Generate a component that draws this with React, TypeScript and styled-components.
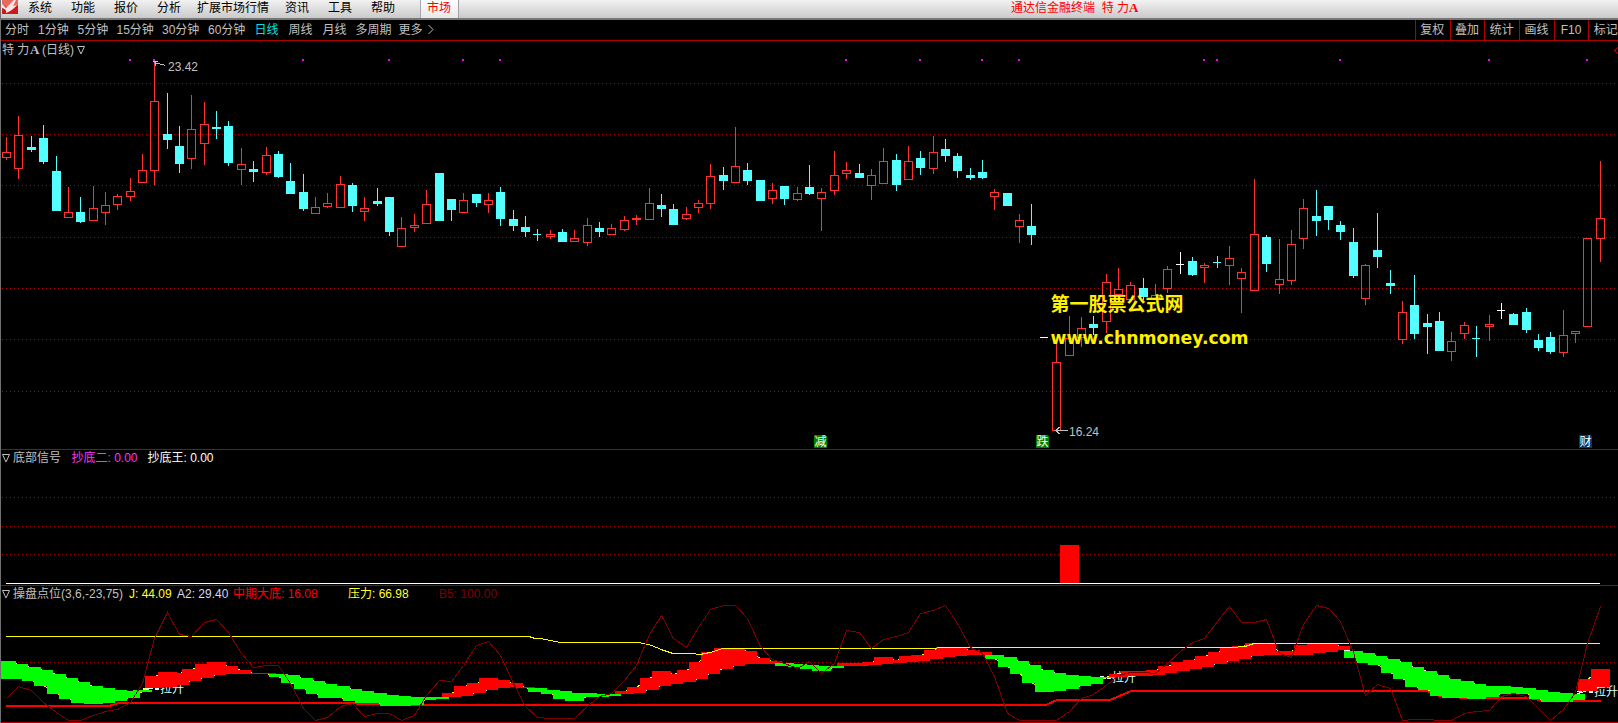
import styled, { createGlobalStyle } from "styled-components";

const GlobalStyle = createGlobalStyle`
  body {
    margin: 0;
    background: #000;
    overflow: hidden;
  }
`;

const LINE_RED = "#b00000";
const UP = "#ff3232";
const DOWN = "#54ffff";

const Screen = styled.div`
  width: 1618px;
  height: 723px;
  box-sizing: border-box;
  border-left: 1px solid #707070;
  background: #000;
  color: #c0c0c0;
  overflow: hidden;
  display: flex;
  flex-direction: column;
  font-family: "Liberation Sans", "Noto Sans CJK SC", sans-serif;
  font-size: 12px;
  line-height: 14px;
  white-space: pre;
`;

const MenuBar = styled.header`
  height: 20px;
  flex: none;
  box-sizing: border-box;
  display: flex;
  color: #000;
  line-height: 16px;
  background: linear-gradient(#f2f2f2, #cacaca);
  border-bottom: 2px solid #767676;
`;

const Logo = styled.svg`
  display: block;
  flex: none;
  width: 16px;
  height: 14px;
  margin: 0 10px 0 1px;
`;

const MenuItem = styled.div<{ $width: number }>`
  flex: none;
  width: ${({ $width }) => $width}px;
`;

const MarketTab = styled.div`
  flex: none;
  width: 39px;
  box-sizing: border-box;
  padding-left: 6px;
  color: #f00;
  background: linear-gradient(#fff, #e8e8e8);
  border-left: 1px solid #a8a8a8;
  border-right: 1px solid #a0a0a0;
`;

const WindowTitle = styled.div`
  margin-left: 552px;
  color: #f00;
`;

const SerifLetter = styled.span`
  font-family: "Liberation Serif", serif;
  font-weight: 700;
  font-size: 13px;
`;

const Toolbar = styled.nav`
  height: 21px;
  flex: none;
  box-sizing: border-box;
  display: flex;
  line-height: 21px;
  padding-left: 4px;
  border-bottom: 1px solid ${LINE_RED};
`;

const Period = styled.div<{ $width: number; $active?: boolean }>`
  flex: none;
  width: ${({ $width }) => $width}px;
  color: ${({ $active }) => ($active ? "#00e6e6" : "inherit")};
`;

const ToolButtons = styled.div`
  display: flex;
  flex: none;
  width: 203px;
  margin-left: auto;
  overflow: hidden;
`;

const ToolButton = styled.div`
  flex: none;
  width: 34.7px;
  box-sizing: border-box;
  border-left: 1px solid ${LINE_RED};
  padding-right: 1px;
  text-align: center;
`;

// Header and drawing share one grid cell, so the captions sit over the chart
const Panel = styled.section<{ $height: number }>`
  flex: none;
  display: grid;
  height: ${({ $height }) => $height}px;
  box-sizing: border-box;
  border-bottom: 1px solid ${LINE_RED};
  overflow: hidden;
  & > * {
    grid-area: 1 / 1;
  }
`;

const Caption = styled.div<{ $top: number }>`
  display: flex;
  align-items: flex-start;
  padding: ${({ $top }) => $top}px 0 0 1px;
  z-index: 1;
`;

const Label = styled.span<{ $color?: string; $width: number }>`
  flex: none;
  width: ${({ $width }) => $width}px;
  color: ${({ $color }) => $color ?? "inherit"};
`;

const Marker = styled.svg`
  flex: none;
  width: 9px;
  height: 9px;
  margin: 3px 2px 0 0;
`;

const Chart = styled.svg`
  display: block;
  shape-rendering: crispEdges;
`;

const PriceText = styled.text`
  fill: #c0c0c0;
  font-size: 12px;
`;

const BadgeText = styled.text`
  fill: #fff;
  font-size: 12px;
`;

const SignalText = styled.text`
  fill: #d8ffff;
  font-size: 12px;
`;

const WatermarkCn = styled.text`
  fill: #fff000;
  font-family: "Noto Sans CJK SC", sans-serif;
  font-weight: 700;
  font-size: 19px;
`;

const WatermarkUrl = styled.text`
  fill: #fff000;
  font-family: "DejaVu Sans", sans-serif;
  font-weight: 700;
  font-size: 18.5px;
`;

type Kind = "u" | "d" | "w";
// kind, x, high, low, body top, body bottom
type Candle = [Kind, number, number, number, number, number];

const candles: Candle[] = [
  ["u", 6, 137, 160, 152, 158], ["u", 18, 116, 179, 135, 169], ["d", 31, 136, 152, 147, 150],
  ["d", 43, 125, 164, 138, 162], ["d", 56, 156, 211, 171, 211], ["u", 68, 187, 218, 212, 218],
  ["d", 80, 197, 223, 212, 222], ["u", 93, 186, 221, 208, 221], ["u", 105, 192, 225, 205, 213],
  ["u", 117, 194, 210, 196, 205], ["u", 130, 178, 201, 191, 197], ["u", 142, 154, 183, 170, 183],
  ["u", 154, 61, 185, 101, 171], ["d", 167, 93, 149, 134, 140], ["d", 179, 126, 173, 146, 164],
  ["u", 191, 95, 169, 129, 159], ["u", 204, 102, 165, 124, 144], ["d", 216, 111, 139, 127, 129],
  ["d", 228, 121, 166, 126, 163], ["u", 241, 148, 185, 164, 170], ["d", 253, 161, 182, 169, 172],
  ["u", 266, 147, 175, 155, 173], ["d", 278, 151, 178, 154, 177], ["d", 290, 163, 194, 181, 194],
  ["d", 303, 174, 211, 192, 209], ["u", 315, 197, 214, 207, 214], ["u", 327, 193, 208, 203, 207],
  ["u", 340, 176, 208, 184, 208], ["d", 352, 183, 212, 185, 206], ["u", 364, 197, 221, 208, 212],
  ["d", 377, 188, 206, 201, 204], ["d", 389, 197, 236, 197, 232], ["u", 401, 217, 247, 228, 247],
  ["u", 414, 214, 232, 225, 228], ["u", 426, 190, 224, 204, 224], ["d", 439, 173, 221, 173, 221],
  ["d", 451, 199, 221, 199, 210], ["u", 463, 193, 213, 200, 213], ["d", 476, 194, 207, 194, 203],
  ["u", 488, 193, 213, 200, 205], ["d", 500, 187, 226, 192, 219], ["d", 513, 210, 231, 219, 226],
  ["d", 525, 216, 237, 227, 232], ["d", 537, 229, 241, 234, 235], ["u", 550, 230, 239, 234, 237],
  ["d", 562, 229, 242, 232, 242], ["u", 574, 230, 242, 238, 242], ["u", 587, 218, 246, 225, 243],
  ["d", 599, 222, 237, 228, 232], ["u", 611, 224, 235, 228, 235], ["u", 624, 216, 231, 220, 230],
  ["u", 636, 215, 225, 218, 220], ["u", 649, 188, 220, 203, 220], ["d", 661, 194, 217, 205, 209],
  ["d", 673, 204, 225, 209, 225], ["u", 686, 207, 220, 214, 219], ["u", 698, 200, 213, 203, 208],
  ["u", 710, 164, 209, 176, 204], ["d", 723, 167, 190, 175, 181], ["u", 735, 127, 183, 166, 183],
  ["d", 747, 163, 185, 170, 181], ["d", 760, 180, 201, 180, 201], ["u", 772, 183, 204, 190, 199],
  ["d", 784, 186, 205, 186, 199], ["u", 797, 187, 201, 193, 200], ["d", 809, 165, 195, 187, 194],
  ["u", 821, 188, 231, 192, 199], ["u", 834, 151, 195, 175, 191], ["u", 846, 162, 179, 170, 174],
  ["d", 859, 164, 178, 173, 178], ["u", 871, 169, 200, 175, 186], ["u", 883, 148, 184, 161, 184],
  ["d", 896, 154, 191, 160, 185], ["u", 908, 146, 180, 161, 180], ["d", 920, 151, 175, 158, 168],
  ["u", 933, 136, 174, 152, 169], ["d", 945, 139, 162, 149, 156], ["d", 957, 153, 178, 156, 171],
  ["d", 970, 168, 180, 175, 178], ["d", 982, 160, 179, 172, 178], ["u", 994, 189, 210, 192, 197],
  ["d", 1007, 193, 206, 193, 206], ["u", 1019, 214, 243, 220, 227], ["d", 1031, 204, 245, 226, 235],
  ["w", 1044, 337, 338, 337, 338], ["u", 1056, 340, 431, 362, 431], ["u", 1069, 316, 356, 338, 356],
  ["u", 1081, 317, 347, 328, 338], ["d", 1093, 316, 335, 324, 328], ["u", 1106, 274, 333, 282, 322],
  ["u", 1118, 268, 295, 289, 295], ["u", 1130, 282, 300, 285, 300], ["d", 1143, 278, 300, 288, 297],
  ["u", 1155, 284, 299, 295, 299], ["u", 1167, 266, 293, 269, 289], ["w", 1180, 252, 274, 264, 265],
  ["d", 1192, 257, 276, 261, 275], ["u", 1204, 263, 283, 265, 268], ["d", 1217, 256, 268, 262, 263],
  ["u", 1229, 246, 285, 258, 266], ["u", 1241, 268, 313, 272, 279], ["u", 1254, 179, 291, 234, 291],
  ["d", 1266, 235, 272, 237, 264], ["u", 1279, 239, 294, 279, 285], ["u", 1291, 230, 285, 244, 281],
  ["u", 1303, 199, 249, 208, 239], ["d", 1316, 190, 236, 216, 221], ["d", 1328, 206, 230, 206, 220],
  ["d", 1340, 221, 240, 225, 232], ["d", 1353, 228, 278, 242, 276], ["u", 1365, 264, 305, 265, 299],
  ["d", 1377, 213, 268, 250, 257], ["d", 1390, 270, 294, 283, 286], ["u", 1402, 301, 344, 312, 340],
  ["d", 1414, 275, 339, 305, 334], ["d", 1427, 314, 354, 323, 327], ["d", 1439, 312, 351, 321, 351],
  ["u", 1451, 332, 361, 341, 352], ["u", 1464, 322, 339, 325, 334], ["d", 1476, 326, 357, 338, 339],
  ["u", 1489, 315, 341, 324, 327], ["w", 1501, 303, 319, 310, 311], ["d", 1513, 313, 325, 314, 325],
  ["d", 1526, 308, 333, 312, 330], ["d", 1538, 334, 351, 340, 348], ["d", 1550, 332, 354, 337, 352],
  ["u", 1563, 310, 357, 335, 353], ["u", 1575, 331, 343, 331, 334], ["u", 1587, 238, 327, 238, 327],
  ["u", 1600, 161, 262, 218, 239],
];

const xs = candles.map((c) => c[1]);

// One value per candle
const oscillator = [
  698, 686, 690, 702, 712, 720, 720, 715, 711, 709, 702, 683, 638, 612, 634, 636, 622, 619, 632, 653,
  667, 665, 665, 683, 708, 720, 717, 706, 703, 716, 713, 713, 720, 715, 695, 680, 681, 665, 645, 641,
  655, 683, 706, 717, 718, 718, 718, 706, 696, 693, 680, 665, 634, 615, 638, 647, 627, 609, 605, 605,
  618, 646, 659, 663, 668, 661, 673, 663, 630, 632, 648, 639, 636, 632, 613, 610, 605, 623, 647, 653,
  676, 713, 720, 720, 720, 720, 711, 698, 694, 685, 675, 672, 672, 673, 663, 651, 642, 638, 621, 606,
  622, 622, 619, 653, 657, 624, 605, 608, 621, 652, 695, 684, 688, 720, 719, 719, 720, 720, 713, 711,
  710, 696, 693, 696, 708, 720, 709, 692, 643, 606,
];

interface Band {
  start: number;
  color: "#0f0" | "#f00";
  steps: [number, number][];
}

const bands: Band[] = [
  {
    start: 0,
    color: "#0f0",
    steps: [
      [661, 679], [664, 679], [667, 681], [670, 686], [674, 694], [678, 699],
      [682, 703], [686, 704], [688, 703], [690, 701], [691, 698], [690, 692],
    ],
  },
  {
    start: 12,
    color: "#f00",
    steps: [
      [676, 688], [672, 687], [673, 685], [669, 681], [664, 678], [662, 675],
      [666, 674], [670, 674], [673, 674], [673, 674],
    ],
  },
  {
    start: 22,
    color: "#0f0",
    steps: [
      [674, 677], [675, 683], [678, 689], [681, 694], [684, 698], [686, 698], [689, 701],
      [691, 703], [693, 703], [695, 706], [696, 706], [697, 705], [697, 700], [697, 699],
    ],
  },
  {
    start: 36,
    color: "#f00",
    steps: [[693, 697], [686, 696], [683, 693], [678, 690], [680, 688], [683, 687], [687, 688]],
  },
  {
    start: 43,
    color: "#0f0",
    steps: [[688, 692], [690, 694], [691, 699], [693, 701], [693, 697], [694, 697], [694, 696]],
  },
  {
    start: 50,
    color: "#f00",
    steps: [
      [691, 694], [687, 693], [678, 690], [671, 686], [674, 684], [670, 682], [662, 679],
      [652, 674], [648, 669], [648, 666], [651, 664], [658, 664], [661, 664],
    ],
  },
  {
    start: 63,
    color: "#0f0",
    steps: [[663, 666], [664, 667], [665, 669], [666, 671], [666, 668]],
  },
  {
    start: 68,
    color: "#f00",
    steps: [
      [663, 666], [663, 666], [662, 665], [657, 664], [660, 663], [656, 662],
      [655, 661], [650, 659], [647, 657], [647, 656], [650, 655], [652, 655],
    ],
  },
  {
    start: 80,
    color: "#0f0",
    steps: [
      [655, 659], [657, 667], [661, 674], [665, 683], [670, 692],
      [673, 691], [675, 689], [676, 686], [677, 684], [677, 678],
    ],
  },
  {
    start: 90,
    color: "#f00",
    steps: [
      [674, 677], [671, 676], [671, 676], [670, 675], [666, 673], [662, 671], [660, 669],
      [656, 667], [652, 664], [648, 661], [646, 659], [643, 656], [643, 655], [651, 655],
      [651, 655], [645, 655], [643, 653], [643, 652], [646, 650],
    ],
  },
  {
    start: 109,
    color: "#0f0",
    steps: [
      [651, 658], [653, 663], [656, 665], [659, 673], [662, 679], [667, 687], [671, 690],
      [675, 696], [679, 698], [681, 698], [684, 699], [686, 697], [686, 694], [687, 694],
      [688, 694], [690, 699], [692, 702], [693, 702], [694, 700],
    ],
  },
  { start: 128, color: "#f00", steps: [[679, 691], [669, 687]] },
];

const steps = bands.flatMap((band) => band.steps.map((s) => ({ s, up: band.color === "#f00" })));
const points = (ys: number[]) => ys.map((y, i) => `${xs[i] + 0.5},${y + 0.5}`).join(" ");
const fastLine = points(steps.map(({ s, up }) => (up ? s[0] : s[1] - 1)));
const slowLine = points(steps.map(({ s, up }) => (up ? s[1] - 1 : s[0])));

const pressure =
  "6,636.5 529,636.5 535,638.5 540,638.5 561,642.5 639,642.5 652,645.5 661,649.5 673,653.5 691,653.5 700,654.5 710,652.5 723,648.5 934,648.5 941,647.5 1231,647.5 1245,646.5 1254,643.5 1600,643.5";
const support =
  "6,706 109,706 119,703 353,703 360,704 379,704 381,705 1046,705 1057,700 1110,700 1131,691 1427,691 1440,696 1466,698 1529,698 1540,700 1560,701 1601,701";

const signalDots = [130, 154, 303, 389, 463, 500, 846, 920, 982, 1019, 1204, 1217, 1340, 1489, 1587];

const menu: [string, number][] = [
  ["系统", 43], ["功能", 43], ["报价", 43], ["分析", 40], ["扩展市场行情", 88],
  ["资讯", 43], ["工具", 43], ["帮助", 49],
];

const periods: [string, number][] = [
  ["分时", 33], ["1分钟", 39.5], ["5分钟", 39], ["15分钟", 45.5], ["30分钟", 46], ["60分钟", 46.5],
  ["日线", 34], ["周线", 34], ["月线", 33], ["多周期", 43], ["更多", 29],
];

const tools = ["复权", "叠加", "统计", "画线", "F10", "标记"];

function Triangle() {
  return (
    <Marker viewBox="0 0 9 9">
      <path d="M0.5 0.5H7.5L4 8Z" fill="none" stroke="#c0c0c0" />
    </Marker>
  );
}

function GridLine({ y }: { y: number }) {
  return <line x1={2} x2={1616} y1={y + 0.5} y2={y + 0.5} stroke={LINE_RED} strokeDasharray="1 3" />;
}

function CandleShape({ candle }: { candle: Candle }) {
  const [kind, x, high, low, top, bottom] = candle;
  if (kind === "w") {
    return (
      <g fill="#fff">
        <rect x={x} y={high} width={1} height={low - high} />
        <rect x={x - 4} y={top} width={8} height={1} />
      </g>
    );
  }
  if (kind === "d") {
    return (
      <g fill={DOWN}>
        <rect x={x} y={high} width={1} height={low - high} />
        <rect x={x - 4} y={top} width={bottom - top > 1 ? 9 : 8} height={bottom - top} />
      </g>
    );
  }
  return (
    <g>
      <rect x={x} y={high} width={1} height={top - high} fill={UP} />
      <rect x={x} y={bottom} width={1} height={low - bottom} fill={UP} />
      <rect x={x - 3.5} y={top + 0.5} width={8} height={bottom - top - 1} fill="none" stroke={UP} />
    </g>
  );
}

function EventBadge({ x, text, color }: { x: number; text: string; color: string }) {
  return (
    <g>
      <path d={`M${x} 435H${x + 11}L${x + 13} 437V448H${x}Z`} fill={color} />
      <BadgeText x={x + 0.5} y={446}>{text}</BadgeText>
    </g>
  );
}

function LiftSignal({ x, y }: { x: number; y: number }) {
  return (
    <g>
      <path d={`M${x - 17} ${y - 4.5}h5M${x - 12} ${y - 5.5}h4`} stroke="#d8ffff" />
      <rect x={x - 5} y={y - 6} width={4} height={3} fill="#d8ffff" />
      <SignalText x={x} y={y}>拉升</SignalText>
    </g>
  );
}

export default function App() {
  return (
    <>
      <GlobalStyle />
      <Screen>
        <MenuBar>
          <Logo viewBox="0 0 16 14">
            <rect width="16" height="14" fill="#cc1a1a" />
            <path d="M0 0H16V5L9 9L0 5Z" fill="#e66a62" />
            <path d="M0 4L4 8L12 0H14L11 6L15 5Q10 11 4 13Q5 9 0 8Z" fill="#f8e4e2" />
          </Logo>
          {menu.map(([text, width]) => (
            <MenuItem key={text} $width={width}>{text}</MenuItem>
          ))}
          <MarketTab>市场</MarketTab>
          <WindowTitle>
            通达信金融终端  特 力<SerifLetter>A</SerifLetter>
          </WindowTitle>
        </MenuBar>
        <Toolbar>
          {periods.map(([text, width]) => (
            <Period key={text} $width={width} $active={text === "日线"}>{text}</Period>
          ))}
          <svg width="6" height="20" viewBox="0 0 6 20">
            <path d="M0.5 5L5 9.5L0.5 14" fill="none" stroke="#c0c0c0" />
          </svg>
          <ToolButtons>
            {tools.map((text) => (
              <ToolButton key={text}>{text}</ToolButton>
            ))}
          </ToolButtons>
        </Toolbar>

        <Panel $height={409}>
          <Caption $top={2}>
            <Label $width={28}>特 力</Label>
            <Label $width={12}><SerifLetter>A</SerifLetter></Label>
            <Label $width={35}>(日线)</Label>
            <Triangle />
          </Caption>
          <Chart width="1617" height="408" viewBox="1 41 1617 408">
            {[83, 134, 185, 237, 288, 339, 391].map((y) => <GridLine key={y} y={y} />)}
            {candles.map((c) => <CandleShape key={c[1]} candle={c} />)}
            {signalDots.map((x) => (
              <rect key={x} x={x - 1} y={59} width={2} height={2} fill="#f0f" />
            ))}
            <path d="M154.5 62.5L165.5 65.5M153 61.5H158M155.5 62V66" fill="none" stroke="#c0c0c0" />
            <PriceText x={168} y={71}>23.42</PriceText>
            <path d="M1056 430.5H1068M1059.5 427L1056 430.5L1059.5 434" fill="none" stroke="#c0c0c0" />
            <PriceText x={1069} y={436}>16.24</PriceText>
            <EventBadge x={814} text="减" color="#008000" />
            <EventBadge x={1036} text="跌" color="#008000" />
            <EventBadge x={1579} text="财" color="#003a70" />
            <path d="M1618 47L1615 50.5L1618 54" fill="none" stroke={LINE_RED} />
            <WatermarkCn x={1050.5} y={311}>第一股票公式网</WatermarkCn>
            <WatermarkUrl x={1050.5} y={344} textLength={198} lengthAdjust="spacingAndGlyphs">
              www.chnmoney.com
            </WatermarkUrl>
          </Chart>
        </Panel>

        <Panel $height={136}>
          <Caption $top={1}>
            <Triangle />
            <Label $width={58.5}>底部信号</Label>
            <Label $width={76} $color="#ff32ff">抄底二: 0.00</Label>
            <Label $width={76} $color="#fff">抄底王: 0.00</Label>
          </Caption>
          <Chart width="1617" height="135" viewBox="1 450 1617 135">
            {[497, 526, 554].map((y) => <GridLine key={y} y={y} />)}
            <rect x={1060} y={545} width={19} height={38} fill="#f00" />
            <rect x={6} y={583} width={1594} height={1} fill="#fff" />
          </Chart>
        </Panel>

        <Panel $height={137}>
          <Caption $top={1}>
            <Triangle />
            <Label $width={116}>操盘点位(3,6,-23,75)</Label>
            <Label $width={48} $color="#ff3">J: 44.09</Label>
            <Label $width={56} $color="#d0d8ff">A2: 29.40</Label>
            <Label $width={115} $color="#f00">中期大底: 16.08</Label>
            <Label $width={91} $color="#ff3">压力: 66.98</Label>
            <Label $width={70} $color="#800000">B5: 100.00</Label>
          </Caption>
          <Chart width="1617" height="136" viewBox="1 586 1617 136">
            <GridLine y={662} />
            <polyline points={support} fill="none" stroke="#f00" strokeWidth={2} />
            <LiftSignal x={160} y={693} />
            <LiftSignal x={1112} y={682} />
            <LiftSignal x={1594} y={696} />
            <polyline points={fastLine} fill="none" stroke="#ff0" />
            <polyline points={slowLine} fill="none" stroke="#fff" />
            {bands.map((band) =>
              band.steps.map(([top, bottom], i) => (
                <rect
                  key={band.start + i}
                  x={xs[band.start + i] - 9}
                  y={top}
                  width={19}
                  height={bottom - top}
                  fill={band.color}
                />
              ))
            )}
            <polyline points={pressure} fill="none" stroke="#ff0" />
            <polyline points={points(oscillator)} fill="none" stroke="#800000" />
          </Chart>
        </Panel>
      </Screen>
    </>
  );
}
